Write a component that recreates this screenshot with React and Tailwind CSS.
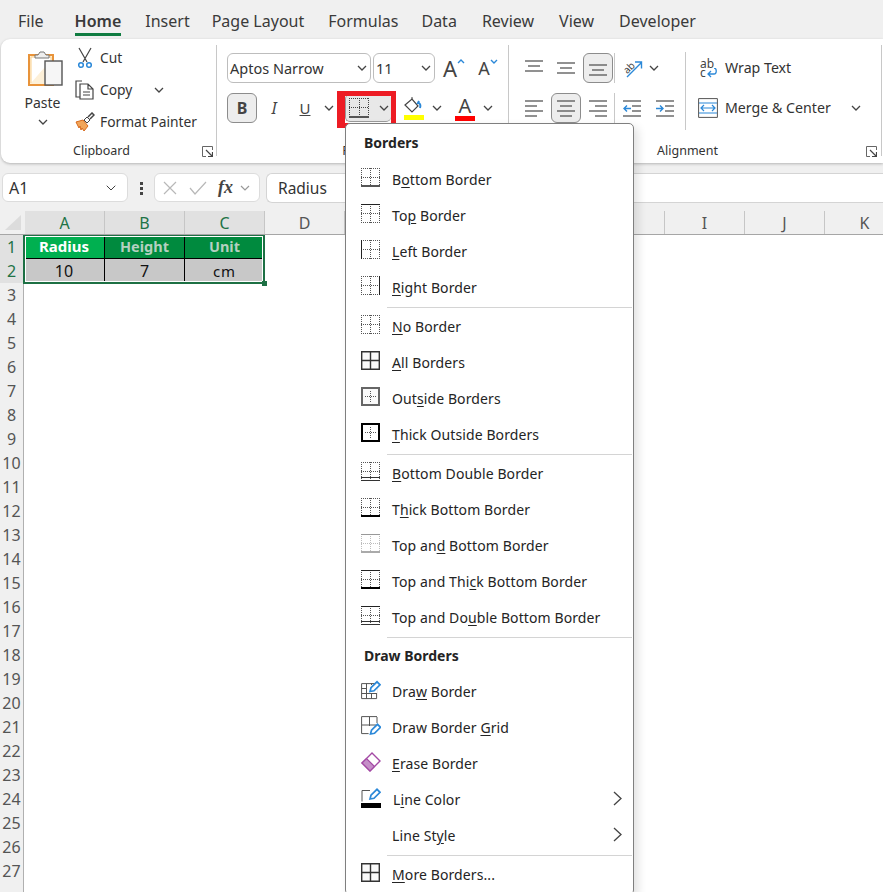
import React from 'react';
import { ChevronDown } from 'lucide-react';

const font = "font-['Noto_Sans',sans-serif]";

const Chev = ({ className = '' }) => (
    <svg width="10" height="6" viewBox="0 0 10 6" className={className}>
        <path d="M1 1l4 4 4-4" fill="none" stroke="#444" strokeWidth="1.3" />
    </svg>
);

const Launcher = () => (
    <svg width="11" height="11" viewBox="0 0 11 11" className="shrink-0">
        <path d="M10.5 4V.5H.5v10H4" fill="none" stroke="#666" />
        <path d="M4 4l6 6M10.5 6v4.5H6" fill="none" stroke="#444" strokeWidth="1.2" />
    </svg>
);

// the 19px border glyphs, dotted grid with solid edges on top
function BorderIcon({ top, bottom, left, right, faded }) {
    const dot = faded ? '#bdbdbd' : '#555';
    return (
        <svg width="19" height="19" viewBox="0 0 19 19" className="shrink-0 mb-[5px]" shapeRendering="crispEdges">
            <path d="M0 .5h19M0 9.500h19M0 18.500h19M.5 0v19M9.500 0v19M18.500 0v19" fill="none" stroke={dot} strokeDasharray="1 1" />
            {top && <path d="M0 .5h19" stroke={faded ? '#999' : '#222'} />}
            {left && <path d="M.5 0v19" stroke="#222" />}
            {right && <path d="M18.5 0v19" stroke="#222" />}
            {bottom === 'thin' && <path d="M0 18h19" stroke={faded ? '#aaa' : '#555'} strokeWidth="2" />}
            {bottom === 'thick' && <path d="M0 18h19" stroke="#000" strokeWidth="2" />}
            {bottom === 'double' && <path d="M0 15.500h19M0 18.500h19" stroke="#333" />}
        </svg>
    );
}

const AllBorders = () => (
    <svg width="19" height="19" viewBox="0 0 19 19" className="shrink-0 mb-[5px]">
        <path d="M.7 .7h17.6v17.6H.7zM9.500 1v17M1 9.500h17" fill="#fafafa" stroke="#333" strokeWidth="1.4" />
    </svg>
);

const OutsideBorders = ({ thick }) => (
    <svg width="19" height="19" viewBox="0 0 19 19" className="shrink-0 mb-[5px]" shapeRendering="crispEdges">
        <rect x="0" y="0" width="19" height="19" fill={thick ? '#fff' : '#fafafa'} />
        <path d="M9.500 4v11M4 9.500h11" fill="none" stroke="#555" strokeDasharray="1 1" />
        <rect x="1" y="1" width="17" height="17" fill="none" stroke={thick ? '#000' : '#666'} strokeWidth="2" />
    </svg>
);

const Pencil = ({ x, y }) => (
    <g transform={`translate(${x} ${y})`}>
        <path d="M1 10.500l1-3.800L8 .8l3 3-6 6z" fill="#fff" stroke="#2b88d8" strokeWidth="1.700" />
    </g>
);

const DrawBorder = () => (
    <svg width="20" height="20" viewBox="0 0 20 20" className="shrink-0 mb-[5px]">
        <path d="M.6 3.600h15v15H.6zM.6 8.500h15M.6 13.500h15M5.500 3.600v15M10.500 3.600v15" fill="none" stroke="#555" />
        <rect x="6" y="5" width="10" height="8" fill="#fff" />
        <Pencil x={8} y={1} />
    </svg>
);

const DrawGrid = () => (
    <svg width="20" height="20" viewBox="0 0 20 20" className="shrink-0 mb-[5px]">
        <path d="M16 .6H.6v17h7M8.500 1v9M1 9h14M16 1v6" fill="none" stroke="#555" />
        <Pencil x={8.500} y={7.500} />
    </svg>
);

const Eraser = () => (
    <svg width="20" height="20" viewBox="0 0 20 20" className="shrink-0 mb-[5px]">
        <path d="M1 11l10-10 8 8-10 10z" fill="#fff" stroke="#a349a4" strokeWidth="1.4" />
        <path d="M1 11l4.500-4.500 8 8L9 19z" fill="#c58fc8" stroke="#a349a4" strokeWidth="1.2" />
    </svg>
);

const LineColor = () => (
    <svg width="20" height="20" viewBox="0 0 20 20" className="shrink-0 mb-[5px]">
        <path d="M9 2.500H1v11" fill="none" stroke="#555" />
        <Pencil x={8} y={0.500} />
        <rect x="0" y="15" width="20" height="5" fill="#000" />
    </svg>
);

const sections = [
    {
        title: 'Borders',
        items: [
            { icon: <BorderIcon bottom="thin" />, text: ['B', 'o', 'ttom Border'] },
            { icon: <BorderIcon top />, text: ['To', 'p', ' Border'] },
            { icon: <BorderIcon left />, text: ['', 'L', 'eft Border'] },
            { icon: <BorderIcon right />, text: ['', 'R', 'ight Border'] },
        ],
    },
    {
        items: [
            { icon: <BorderIcon />, text: ['', 'N', 'o Border'] },
            { icon: <AllBorders />, text: ['', 'A', 'll Borders'] },
            { icon: <OutsideBorders />, text: ['Out', 's', 'ide Borders'] },
            { icon: <OutsideBorders thick />, text: ['', 'T', 'hick Outside Borders'] },
        ],
    },
    {
        items: [
            { icon: <BorderIcon bottom="double" />, text: ['', 'B', 'ottom Double Border'] },
            { icon: <BorderIcon bottom="thick" />, text: ['T', 'h', 'ick Bottom Border'] },
            { icon: <BorderIcon top bottom="thin" faded />, text: ['Top an', 'd', ' Bottom Border'] },
            { icon: <BorderIcon top bottom="thick" />, text: ['Top and Thi', 'c', 'k Bottom Border'] },
            { icon: <BorderIcon top bottom="double" />, text: ['Top and Do', 'u', 'ble Bottom Border'] },
        ],
    },
    {
        title: 'Draw Borders',
        items: [
            { icon: <DrawBorder />, text: ['Dra', 'w', ' Border'] },
            { icon: <DrawGrid />, text: ['Draw Border ', 'G', 'rid'] },
            { icon: <Eraser />, text: ['', 'E', 'rase Border'] },
            { icon: <LineColor />, text: ['L', 'i', 'ne Color'], more: true },
            { icon: <span className="w-[19px] shrink-0" />, text: ['Line St', 'y', 'le'], more: true },
        ],
    },
    {
        items: [{ icon: <AllBorders />, text: ['', 'M', 'ore Borders...'] }],
    },
];

function BordersMenu() {
    return (
        <div className="absolute left-[345px] top-[123px] w-[289px] h-[772px] bg-white border border-[#7f7f7f] rounded-[5px] shadow-[4px_4px_10px_rgba(0,0,0,0.12)] text-[14px] text-[#242424]">
            {sections.map((section, i) => (
                <div key={i}>
                    {i > 0 && <div className="h-px bg-[#d4d4d4] ml-[41px] mr-px my-px" />}
                    {section.title && (
                        <div className={`flex items-center pl-[18px] font-bold ${i === 0 ? 'h-[38px]' : 'h-[35px]'}`}>
                            <span className="mb-[2px]">{section.title}</span>
                        </div>
                    )}
                    {section.items.map((item) => (
                        <div key={item.text.join('')} className="h-[36px] flex items-center pl-[15px]">
                            {item.icon}
                            <span className={`${item.icon.type === DrawBorder || item.icon.type === DrawGrid || item.icon.type === Eraser ? 'ml-[11px]' : 'ml-[12px]'} mb-[2px] tracking-[0.1px]`}>
                                {item.text[0]}<u className="underline-offset-2">{item.text[1]}</u>{item.text[2]}
                            </span>
                            {item.more && (
                                <svg width="9" height="15" viewBox="0 0 9 15" className="ml-auto mr-[11px] mb-[3px]">
                                    <path d="M1 1l7 6.500-7 6.500" fill="none" stroke="#444" strokeWidth="1.300" />
                                </svg>
                            )}
                        </div>
                    ))}
                </div>
            ))}
        </div>
    );
}

const tabs = [
    { name: 'File', cls: 'mr-[7px]' },
    { name: 'Home', cls: '' },
    { name: 'Insert', cls: 'mr-[-2px]' },
    { name: 'Page Layout', cls: '' },
    { name: 'Formulas', cls: 'mr-[-1px]' },
    { name: 'Data', cls: 'mr-[1px]' },
    { name: 'Review', cls: 'mr-[1px]' },
    { name: 'View', cls: 'mr-[1px]' },
    { name: 'Developer', cls: '' },
];

function Tabs() {
    return (
        <div className="h-[39px] flex pl-[18px] gap-[24px] bg-[#f0f0f0] text-[16px] text-[#3a3a3a] shrink-0">
            {tabs.map((t) => (
                <div key={t.name} className={`h-[36px] pt-[9px] leading-6 border-b-[3px] ${t.name === 'Home' ? 'border-[#107c41] font-semibold' : 'border-transparent'} ${t.cls}`}>
                    {t.name}
                </div>
            ))}
        </div>
    );
}

function ClipboardGroup() {
    return (
        <div className="w-[215px] shrink-0 flex flex-col h-full">
            <div className="flex pl-[23px] pt-[3px]">
                <div className="w-[39px] flex flex-col items-center pt-[8px]">
                    <svg width="35" height="37" viewBox="0 0 35 37" className="ml-[3px]">
                        <rect x="1" y="5" width="24" height="30" fill="#fdf0d8" stroke="#e8933a" strokeWidth="2" />
                        <path d="M3 33V7h20v3" fill="#fff" stroke="#f9cf8c" />
                        <path d="M7 8V5h3l2-3h4l2 3h3v3z" fill="#eee" stroke="#777" />
                        <rect x="17" y="11" width="17" height="24" fill="#f6f6f6" stroke="#555" strokeWidth="1.4" />
                    </svg>
                    <span className="text-[14px] leading-5 mt-[6px] text-[#333] -translate-x-px">Paste</span>
                    <Chev className="mt-[6px] -translate-x-px" />
                </div>
                <div className="ml-[12px] text-[13.800px] text-[#333]">
                    <div className="h-[32px] flex items-center">
                        <svg width="20" height="22" viewBox="0 0 20 22" className="shrink-0">
                            <path d="M4 1l8 14M16 1L8 15" fill="none" stroke="#444" strokeWidth="1.2" />
                            <circle cx="6" cy="18" r="2.300" fill="none" stroke="#2b88d8" strokeWidth="1.5" />
                            <circle cx="14" cy="18" r="2.300" fill="none" stroke="#2b88d8" strokeWidth="1.5" />
                        </svg>
                        <span className="ml-[5px]">Cut</span>
                    </div>
                    <div className="h-[32px] flex items-center">
                        <svg width="20" height="20" viewBox="0 0 20 20" className="shrink-0">
                            <path d="M5 17H1V1h6" fill="none" stroke="#444" strokeWidth="1.2" />
                            <path d="M5 4h8l5 5v10H5zM13 4v5h5M8 12h7M8 15h7" fill="#fff" stroke="#444" strokeWidth="1.2" />
                        </svg>
                        <span className="ml-[5px]">Copy</span>
                        <Chev className="ml-[22px]" />
                    </div>
                    <div className="h-[32px] flex items-center">
                        <svg width="20" height="20" viewBox="0 0 20 20" className="shrink-0">
                            <path d="M1 10l7-2 5 6-4 5-2-3-1 2-1-4-1 2z" fill="#f2a65a" stroke="#d86a1c" />
                            <path d="M9 8l3-3 3 3-3 3z" fill="#fff" stroke="#444" />
                            <path d="M13 5l4-4 2 2-4 4" fill="none" stroke="#444" strokeWidth="1.500" />
                        </svg>
                        <span className="ml-[5px]">Format Painter</span>
                    </div>
                </div>
            </div>
            <GroupLabel label="Clipboard" />
        </div>
    );
}

function GroupLabel({ label, pad = 'mr-[3px]' }) {
    return (
        <div className={`mt-auto mb-[2px] h-[20px] flex items-center text-[12.500px] text-[#333] ${pad}`}>
            <span className="flex-1 text-center">{label}</span>
            <Launcher />
        </div>
    );
}

const Divider = ({ className = '' }) => <div className={`w-px bg-[#c8c8c8] shrink-0 ${className}`} />;

function Select({ w, text }) {
    return (
        <div className={`${w} h-[30px] shrink-0 flex items-center justify-between pl-[2px] pr-[3px] border border-[#bdbdbd] rounded-[6px] text-[14.500px] text-[#333]`}>
            <span className="mt-px">{text}</span>
            <Chev />
        </div>
    );
}

function FontSizeIcon({ up, size }) {
    return (
        <div className="w-[34px] flex justify-center items-start text-[#444]">
            <span className={`${size} leading-7`}>A</span>
            <svg width="8" height="6" viewBox="0 0 8 6" className="mt-[5px]">
                <path d={up ? 'M1 4l3-3 3 3' : 'M1 1l3 3 3-3'} fill="none" stroke="#2b88d8" strokeWidth="1.400" />
            </svg>
        </div>
    );
}

function FontGroup() {
    return (
        <div className="w-[291px] shrink-0 flex flex-col h-full">
            <div className="pl-[10px] pt-[14px]">
                <div className="h-[30px] flex items-center">
                    <Select w="w-[144px]" text="Aptos Narrow" />
                    <div className="ml-[2px]"><Select w="w-[62px]" text="11" /></div>
                    <div className="ml-[2px] flex"><FontSizeIcon up size="text-[22px]" /><FontSizeIcon size="text-[18px]" /></div>
                </div>
                <div className="h-[30px] mt-[10px] flex items-center text-[#444]">
                    <div className="w-[30px] h-[30px] flex items-center justify-center border border-[#8c8c8c] rounded-[6px] bg-[#ededed] font-bold text-[16px]">B</div>
                    <div className="w-[34px] text-center italic text-[16px]">I</div>
                    <div className="w-[28px] text-center underline text-[15px]">U</div>
                    <div className="w-[20px] flex justify-center"><Chev /></div>
                    <div className="ml-[6px] w-[46px] h-[28px] flex items-center pl-[3px] gap-[10px] rounded-[5px] bg-[#e8e8e8] border-b border-l border-[#9a9a9a]">
                        <svg width="20" height="20" viewBox="0 0 20 20" className="shrink-0" shapeRendering="crispEdges">
                            <path d="M0 .5h20M0 9.500h20M.5 0v18M10.500 0v18M19.500 0v18" fill="none" stroke="#444" strokeDasharray="1 1" />
                            <path d="M0 18.500h20" stroke="#555" strokeWidth="2" />
                        </svg>
                        <Chev />
                    </div>
                    <div className="ml-[11px] w-[24px] flex justify-center">
                        <svg width="22" height="24" viewBox="0 0 22 24">
                            <path d="M2 9l7-6 6 7-6 6z" fill="#fff" stroke="#444" strokeWidth="1.200" />
                            <path d="M9 3V1" stroke="#444" />
                            <path d="M17 12c1-3 0-5-2-5l1-2" fill="none" stroke="#2b88d8" strokeWidth="2" />
                            <rect x="1" y="19" width="20" height="5" fill="#ffff00" />
                        </svg>
                    </div>
                    <div className="w-[22px] flex justify-center"><Chev /></div>
                    <div className="w-[34px] flex flex-col items-center">
                        <span className="text-[20px] leading-[21px]">A</span>
                        <span className="w-[20px] h-[5px] bg-[#ff0000]" />
                    </div>
                    <div className="w-[12px] flex justify-center"><Chev /></div>
                </div>
            </div>
            <GroupLabel label="Font" />
        </div>
    );
}

// horizontal text lines for the alignment and indent buttons
function Lines({ rows, children }) {
    return (
        <svg width="20" height="20" viewBox="0 0 20 20" className="shrink-0">
            {rows.map(([a, b, y]) => (
                <path key={y} d={`M${a} ${y}H${b}`} stroke="#555" strokeWidth="1.300" />
            ))}
            {children}
        </svg>
    );
}

const Slot = ({ on, children }) => (
    <div className="w-[32px] h-[30px] flex justify-center">
        <div className={`w-[30px] h-[30px] flex items-center justify-center rounded-[6px] ${on ? 'bg-[#ededed] border border-[#8c8c8c]' : ''}`}>{children}</div>
    </div>
);

function AlignmentGroup() {
    return (
        <div className="flex-1 flex flex-col h-full">
            <div className="flex">
                <div className="pl-[9px] pt-[14px]">
                    <div className="flex h-[30px] items-center">
                        <Slot><Lines rows={[[1, 19, 3], [4, 16, 8], [1, 19, 13]]} /></Slot>
                        <Slot><Lines rows={[[1, 19, 5], [4, 16, 10], [1, 19, 15]]} /></Slot>
                        <Slot on><Lines rows={[[1, 19, 7], [4, 16, 12], [1, 19, 17]]} /></Slot>
                        <Divider className="h-[30px]" />
                        <div className="w-[34px] flex justify-center">
                            <svg width="22" height="22" viewBox="0 0 22 22">
                                <path d="M6 20L20 6M14 5h6.500v6.500" fill="none" stroke="#2b88d8" strokeWidth="1.400" />
                                <text x="2" y="15" fontSize="10" fill="#444" transform="rotate(-45 7 11)">ab</text>
                            </svg>
                        </div>
                        <Chev />
                    </div>
                    <div className="flex h-[30px] mt-[10px] items-center">
                        <Slot><Lines rows={[[1, 19, 3], [1, 13, 8], [1, 19, 13], [1, 13, 18]]} /></Slot>
                        <Slot on><Lines rows={[[1, 19, 3], [4, 16, 8], [1, 19, 13], [4, 16, 18]]} /></Slot>
                        <Slot><Lines rows={[[1, 19, 3], [7, 19, 8], [1, 19, 13], [7, 19, 18]]} /></Slot>
                        <Divider className="h-[30px]" />
                        <div className="w-[34px] flex justify-center">
                            <Lines rows={[[1, 19, 3], [10, 19, 8], [10, 19, 13], [1, 19, 18]]}>
                                <path d="M9 10.500H2M5 7.500l-3 3 3 3" fill="none" stroke="#2b88d8" strokeWidth="1.400" />
                            </Lines>
                        </div>
                        <div className="w-[32px] flex justify-center">
                            <Lines rows={[[1, 19, 3], [10, 19, 8], [10, 19, 13], [1, 19, 18]]}>
                                <path d="M1 10.500h7M5 7.500l3 3-3 3" fill="none" stroke="#2b88d8" strokeWidth="1.400" />
                            </Lines>
                        </div>
                    </div>
                </div>
                <Divider className="h-[78px] mt-[13px] ml-[4px]" />
                <div className="pl-[12px] pt-[14px] text-[14.200px] text-[#333] flex-1">
                    <div className="h-[30px] flex items-center pl-[2px]">
                        <div className="w-[20px] shrink-0 text-[#444]">
                            <div className="h-[9px] text-[12px] leading-[9px]">ab</div>
                            <div className="h-[10px] flex text-[12px] leading-[10px]">
                                <span>c</span>
                                <svg width="11" height="10" viewBox="0 0 11 10" className="ml-px">
                                    <path d="M7 0c3 0 3 6 0 6H1M4 3L1 6l3 3" fill="none" stroke="#2b88d8" strokeWidth="1.300" />
                                </svg>
                            </div>
                        </div>
                        <span className="ml-[5px]">Wrap Text</span>
                    </div>
                    <div className="h-[30px] mt-[10px] flex items-center">
                        <svg width="20" height="20" viewBox="0 0 20 20" className="shrink-0">
                            <path d="M.6 .6h18.800v18.800H.6z" fill="#fff" stroke="#555" />
                            <path d="M1 5h18M1 15h18" stroke="#2b88d8" strokeWidth="1.200" />
                            <path d="M3 10h14M6 7l-3 3 3 3M14 7l3 3-3 3" fill="none" stroke="#2b88d8" strokeWidth="1.200" />
                        </svg>
                        <span className="ml-[7px]">Merge &amp; Center</span>
                        <Chev className="ml-[20px]" />
                    </div>
                </div>
            </div>
            <GroupLabel label="Alignment" pad="mr-[4px]" />
        </div>
    );
}

function Ribbon() {
    return (
        <div className="ml-px h-[124px] shrink-0 flex rounded-l-[9px] bg-white shadow-[0_1px_3px_rgba(0,0,0,0.25)] relative">
            <ClipboardGroup />
            <Divider className="h-[111px] mt-[6px]" />
            <FontGroup />
            <Divider className="h-[111px] mt-[6px]" />
            <AlignmentGroup />
            <Divider className="h-[111px] mt-[6px] mr-px" />
        </div>
    );
}

function FormulaBar() {
    return (
        <div className="h-[40px] shrink-0 bg-[#f0f0f0] pt-[10px] flex text-[16px] text-[#333]">
            <div className="ml-[2px] w-[126px] h-[29px] flex items-center justify-between pl-[6px] pr-[8px] bg-white border border-[#dcdcdc] rounded-[6px]">
                <span>A1</span>
                <ChevronDown size={16} strokeWidth={1.4} />
            </div>
            <div className="w-[26px] flex flex-col items-center justify-center gap-[2px]">
                <span className="w-[3px] h-[3px] bg-[#444]" />
                <span className="w-[3px] h-[3px] bg-[#444]" />
                <span className="w-[3px] h-[3px] bg-[#444]" />
            </div>
            <div className="w-[106px] h-[29px] flex items-center pl-[7px] bg-white border border-[#dcdcdc] rounded-[6px]">
                <svg width="16" height="16" viewBox="0 0 16 16" className="shrink-0">
                    <path d="M2 2l12 12M14 2L2 14" stroke="#b8b8b8" strokeWidth="1.200" />
                </svg>
                <svg width="20" height="16" viewBox="0 0 20 16" className="ml-[10px] shrink-0">
                    <path d="M2 8l5 6L18 2" fill="none" stroke="#b8b8b8" strokeWidth="1.200" />
                </svg>
                <span className="ml-[10px] italic font-['Liberation_Serif',serif] font-bold text-[18px] text-[#444]">fx</span>
                <svg width="10" height="6" viewBox="0 0 10 6" className="ml-[7px]">
                    <path d="M1 1l4 4 4-4" fill="none" stroke="#999" strokeWidth="1.200" />
                </svg>
            </div>
            <div className="ml-[6px] flex-1 h-[30px] flex items-center pl-[11px] bg-white border-y border-l border-[#d4d4d4] rounded-tl-[6px] rounded-bl-[6px] text-[15.500px]">
                <span className="mt-px">Radius</span>
            </div>
        </div>
    );
}

// E to H sit behind the open menu, so their labels never show
const columns = ['A', 'B', 'C', 'D', '', '', '', '', 'I', 'J', 'K'];

function ColumnHeaders() {
    return (
        <div className="h-[32px] shrink-0 flex bg-[#f0f0f0] border-b border-[#a6a6a6]">
            <div className="w-[25px] h-[31px] shrink-0 flex items-end justify-end pr-[4px] pb-[4px]">
                <svg width="16" height="15" viewBox="0 0 16 15"><path d="M0 15L16 0v15z" fill="#dcdcdc" /></svg>
            </div>
            {columns.map((c, i) => (
                <div key={i} className={`w-[80px] shrink-0 mt-[8px] h-[23px] flex items-center justify-center text-[16px] border-r border-[#c6c6c6] ${i < 3 ? 'bg-[#e1e1e1] text-[#217346]' : 'text-[#555]'}`}>
                    {c}
                </div>
            ))}
        </div>
    );
}

const rowNumbers = Array.from({ length: 28 }, (_, i) => i + 1);

function SelectedTable() {
    return (
        <div className="relative w-[240px] h-[48px] grid grid-cols-[81px_80px_79px] grid-rows-2">
            <div className="flex items-center justify-center bg-[#00b050] text-white font-bold text-[15px] border-r border-b border-black">Radius</div>
            <div className="flex items-center justify-center bg-[#008a3e] text-[#b4d0c0] font-bold text-[14.500px] border-r border-b border-black">Height</div>
            <div className="flex items-center justify-center bg-[#008a3e] text-[#b4d0c0] font-bold text-[14.500px] border-b border-black">Unit</div>
            <div className="flex items-center justify-center bg-[#c8c8c8] text-[#111] text-[16px] border-r border-black">10</div>
            <div className="flex items-center justify-center bg-[#c8c8c8] text-[#111] text-[16px] border-r border-black">7</div>
            <div className="flex items-center justify-center bg-[#c8c8c8] text-[#111] text-[15px] tracking-[1px]">cm</div>
            <div className="absolute -inset-px border-2 border-[#1d7044] shadow-[inset_0_0_0_1px_#fff] pointer-events-none" />
            <div className="absolute -right-[3px] -bottom-[3px] w-[5px] h-[5px] bg-[#1d7044]" />
        </div>
    );
}

function Sheet() {
    return (
        <div className="flex-1 flex min-h-0 overflow-hidden">
            <div className="w-[24px] shrink-0 border-r border-[#b0b0b0] bg-[#f0f0f0]">
                {rowNumbers.map((n) => (
                    <div key={n} className={`h-[24px] pb-px flex items-center justify-center text-[16px] ${n < 3 ? 'bg-[#e1e1e1] text-[#217346]' : 'text-[#555]'}`}>
                        {n < 28 ? n : ''}
                    </div>
                ))}
            </div>
            <div className="flex-1 bg-white">
                <SelectedTable />
            </div>
        </div>
    );
}

export default function App() {
    return (
        <div className={`relative w-[883px] h-[892px] overflow-hidden flex flex-col bg-white ${font}`}>
            <Tabs />
            <div className="bg-[#f0f0f0] shrink-0"><Ribbon /></div>
            <FormulaBar />
            <ColumnHeaders />
            <Sheet />
            <div className="absolute left-[337px] top-[91px] w-[59px] h-[37px] border-y-[5px] border-r-[5px] border-l-[8px] border-[#ed1c24] pointer-events-none" />
            <BordersMenu />
        </div>
    );
}
